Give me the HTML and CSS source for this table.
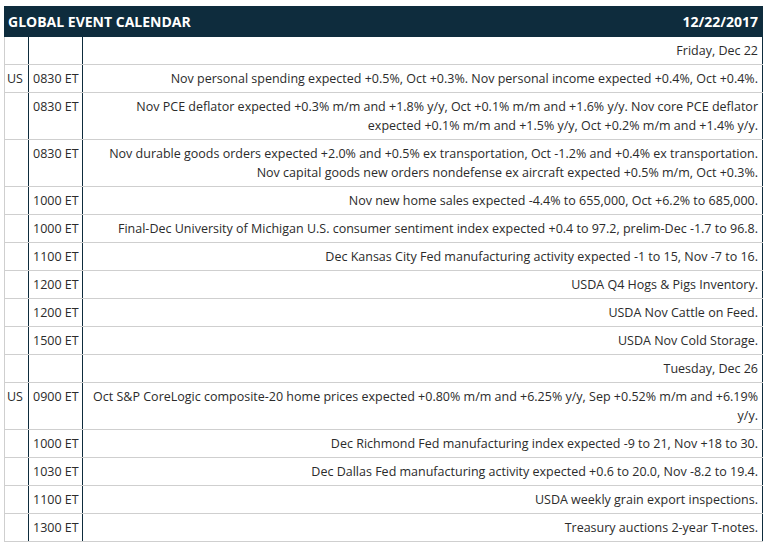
FILE: index.html
```html
<!DOCTYPE html>
<html>
<head>
<meta charset="utf-8">
<link rel="stylesheet" href="styles.css">
</head>
<body>
<div class="cal">
  <div class="head"><span>GLOBAL EVENT CALENDAR</span><span>12/22/2017</span></div>
  <table class="grid">
    <colgroup><col class="c-cty"><col class="c-time"><col class="c-desc"></colgroup>
    <tr class="day"><td></td><td></td><td>Friday, Dec 22</td></tr>
    <tr><td>US</td><td>0830 ET</td><td>Nov personal spending expected +0.5%, Oct +0.3%. Nov personal income expected +0.4%, Oct +0.4%.</td></tr>
    <tr><td></td><td>0830 ET</td><td>Nov PCE deflator expected +0.3% m/m and +1.8% y/y, Oct +0.1% m/m and +1.6% y/y. Nov core PCE deflator expected +0.1% m/m and +1.5% y/y, Oct +0.2% m/m and +1.4% y/y.</td></tr>
    <tr><td></td><td>0830 ET</td><td>Nov durable goods orders expected +2.0% and +0.5% ex transportation, Oct -1.2% and +0.4% ex transportation. Nov capital goods new orders nondefense ex aircraft expected +0.5% m/m, Oct +0.3%.</td></tr>
    <tr><td></td><td>1000 ET</td><td>Nov new home sales expected -4.4% to 655,000, Oct +6.2% to 685,000.</td></tr>
    <tr><td></td><td>1000 ET</td><td>Final-Dec University of Michigan U.S. consumer sentiment index expected +0.4 to 97.2, prelim-Dec -1.7 to 96.8.</td></tr>
    <tr><td></td><td>1100 ET</td><td>Dec Kansas City Fed manufacturing activity expected -1 to 15, Nov -7 to 16.</td></tr>
    <tr><td></td><td>1200 ET</td><td>USDA Q4 Hogs &amp; Pigs Inventory.</td></tr>
    <tr><td></td><td>1200 ET</td><td>USDA Nov Cattle on Feed.</td></tr>
    <tr><td></td><td>1500 ET</td><td>USDA Nov Cold Storage.</td></tr>
    <tr class="day"><td></td><td></td><td>Tuesday, Dec 26</td></tr>
    <tr><td>US</td><td>0900 ET</td><td>Oct S&amp;P CoreLogic composite-20 home prices expected +0.80% m/m and +6.25% y/y, Sep +0.52% m/m and +6.19% y/y.</td></tr>
    <tr><td></td><td>1000 ET</td><td>Dec Richmond Fed manufacturing index expected -9 to 21, Nov +18 to 30.</td></tr>
    <tr><td></td><td>1030 ET</td><td>Dec Dallas Fed manufacturing activity expected +0.6 to 20.0, Nov -8.2 to 19.4.</td></tr>
    <tr><td></td><td>1100 ET</td><td>USDA weekly grain export inspections.</td></tr>
    <tr><td></td><td>1300 ET</td><td>Treasury auctions 2-year T-notes.</td></tr>
  </table>
</div>
</body>
</html>
```
FILE: styles.css
```css
html, body {
  margin: 0;
  padding: 0;
  background: #ffffff;
}
body {
  padding: 6px 7px 0 4px;
  font-family: "Open Sans", "Liberation Sans", sans-serif;
  color: #2b2b2b;
}
.cal {
  width: 759px;
}
.head {
  display: flex;
  justify-content: space-between;
  align-items: center;
  height: 31px;
  padding: 0 5px 0 4px;
  background: #0e2c3d;
  color: #ffffff;
  font-weight: bold;
  font-size: 14px;
  box-sizing: border-box;
}
.grid {
  width: 100%;
  border-collapse: collapse;
  table-layout: fixed;
  font-size: 12.5px;
  line-height: 19px;
}
.c-cty { width: 24px; }
.c-time { width: 54px; }
.grid td {
  border-bottom: 1px solid #cfcfcf;
  padding: 4px 3px 4px 3px;
  vertical-align: top;
  text-align: right;
  white-space: normal;
}
.grid td:nth-child(1) {
  border-left: 1px solid #cfcfcf;
  border-right: 1px solid #0e2c3d;
  text-align: left;
  padding-left: 2px;
  padding-right: 0;
}
.grid td:nth-child(2) {
  border-right: 1px solid #0e2c3d;
  text-align: left;
  padding-left: 4px;
  padding-right: 0;
}
.grid td:nth-child(3) {
  border-right: 1px solid #0e2c3d;
  padding-right: 4px;
  padding-left: 5px;
}
.grid tr.day td {
  height: 19px;
}
```
